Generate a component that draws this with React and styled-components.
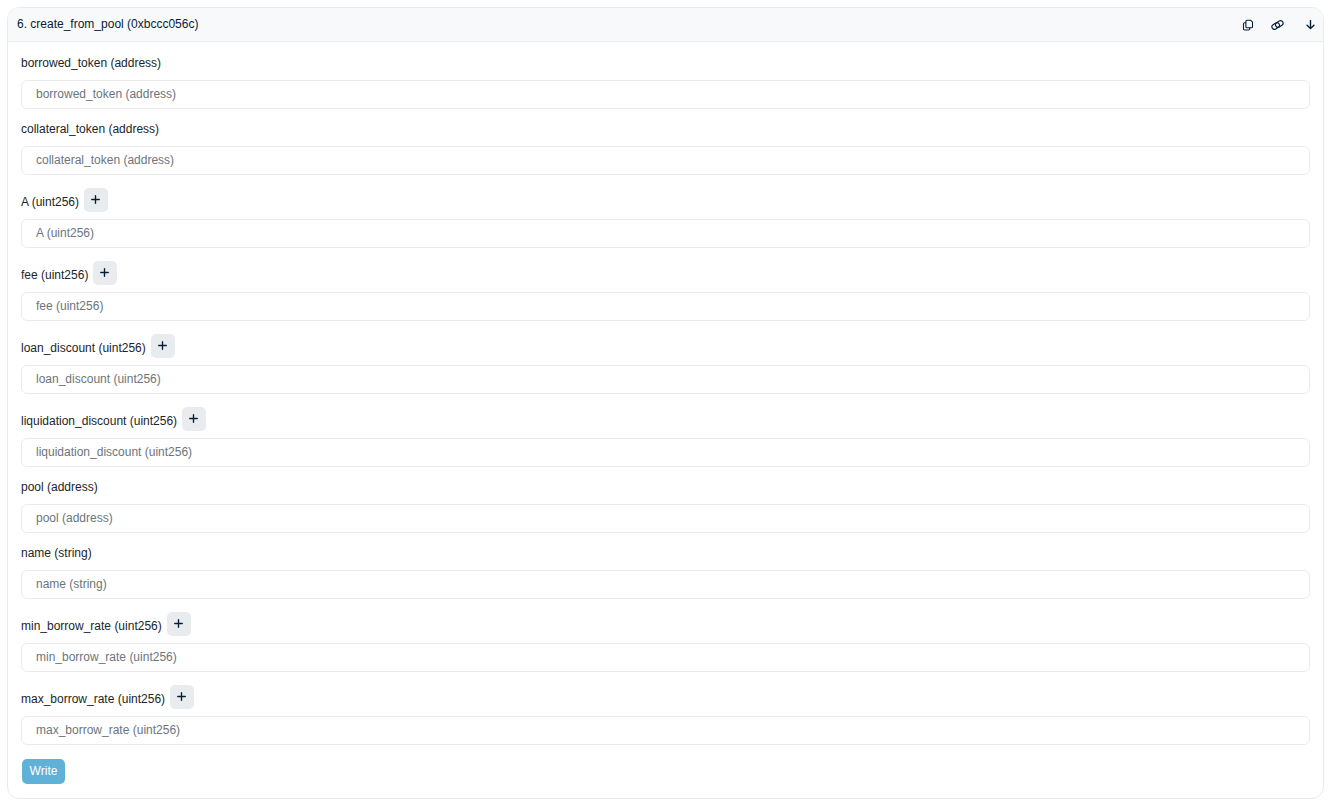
import React from "react";
import styled, { createGlobalStyle } from "styled-components";
import { FaArrowDown, FaPlus } from "react-icons/fa6";

const GlobalStyle = createGlobalStyle`
  *, *::before, *::after { box-sizing: border-box; }
  body {
    margin: 0;
    background: #fff;
    color: #212529;
    font-family: "Helvetica Neue", "Liberation Sans", Arial, sans-serif;
    font-size: 12px;
  }
  button, input { font: inherit; }
`;

const Card = styled.section`
  margin: 7px 5px 5px 7px;
  border: 1px solid #e9ecef;
  border-radius: 12px;
  overflow: hidden;
`;

const CardHeader = styled.header`
  display: flex;
  align-items: center;
  justify-content: space-between;
  height: 34px;
  padding: 0 7px 0 9px;
  background: #f8f9fa;
  border-bottom: 1px solid #e9ecef;
  color: #081d35;
`;

const Title = styled.h2`
  margin: 0;
  padding-bottom: 2px;
  font-size: 12px;
  font-weight: 400;
  line-height: 16px;
`;

const Actions = styled.div`
  display: flex;
  align-items: center;
  gap: ${({ $gap }) => $gap}px;
`;

const IconButton = styled.button`
  display: flex;
  padding: 0;
  border: 0;
  background: none;
  color: inherit;
  cursor: pointer;
`;

const Form = styled.form`
  display: flex;
  flex-direction: column;
  gap: 13px;
  padding: 14px 13px 13px;
`;

const LabelRow = styled.div`
  display: flex;
  align-items: flex-end;
  gap: 5px;
  margin-bottom: 7px;
`;

const Label = styled.label`
  padding-bottom: 2px;
  line-height: 15px;
`;

const AddButton = styled.button`
  display: flex;
  align-items: center;
  justify-content: center;
  width: 24px;
  height: 24px;
  padding: 0 1px 2px 0;
  border: 0;
  border-radius: 5px;
  background: #e9ecef;
  color: #081d35;
  cursor: pointer;
`;

const Input = styled.input`
  display: block;
  width: 100%;
  height: 29px;
  padding: 0 14px 1px;
  border: 1px solid #e9ecef;
  border-radius: 6px;
  background: #fff;
  color: #212529;
  &::placeholder { color: #6c757d; opacity: 1; }
`;

const WriteButton = styled.button`
  align-self: flex-start;
  height: 25px;
  min-width: 43px;
  margin: 1px;
  padding: 0 7px 2px;
  border: 0;
  border-radius: 5px;
  background: #5fb1d8;
  color: #fff;
  font-weight: 500;
  cursor: pointer;
`;

const Outline = styled.svg`
  display: block;
  fill: none;
  stroke: currentColor;
  stroke-width: 1.1;
  stroke-linecap: round;
  stroke-linejoin: round;
`;

const CopyIcon = () => (
  <Outline width="12" height="12" viewBox="0 0 12 12" aria-hidden="true">
    <path d="M5 1.2h3.6l1.9 1.9v4.6a1.1 1.1 0 0 1-1.1 1.1H5a1.1 1.1 0 0 1-1.1-1.1V2.3A1.1 1.1 0 0 1 5 1.2Z" />
    <path d="M3.6 3.8H2.6a1.1 1.1 0 0 0-1.1 1.1v5a1.1 1.1 0 0 0 1.1 1.1h4a1.1 1.1 0 0 0 1.1-1.1V9" />
  </Outline>
);

const LinkIcon = () => (
  <Outline width="13" height="12" viewBox="0 0 13 12" aria-hidden="true">
    <rect x="0.7" y="4.5" width="8" height="5" rx="2.5" transform="rotate(-32 4.7 7)" />
    <rect x="4.3" y="2.5" width="8" height="5" rx="2.5" transform="rotate(-32 8.3 5)" />
  </Outline>
);

const fields = [
  { name: "borrowed_token", type: "address" },
  { name: "collateral_token", type: "address" },
  { name: "A", type: "uint256" },
  { name: "fee", type: "uint256" },
  { name: "loan_discount", type: "uint256" },
  { name: "liquidation_discount", type: "uint256" },
  { name: "pool", type: "address" },
  { name: "name", type: "string" },
  { name: "min_borrow_rate", type: "uint256" },
  { name: "max_borrow_rate", type: "uint256" },
];

const Field = ({ name, type }) => {
  const text = `${name} (${type})`;
  return (
    <div>
      <LabelRow>
        <Label htmlFor={name}>{text}</Label>
        {type === "uint256" && (
          <AddButton type="button" aria-label={`Add zeros to ${name}`}>
            <FaPlus size={11} />
          </AddButton>
        )}
      </LabelRow>
      <Input id={name} type="text" placeholder={text} />
    </div>
  );
};

export default function App() {
  return (
    <>
      <GlobalStyle />
      <Card>
        <CardHeader>
          <Title>6. create_from_pool (0xbccc056c)</Title>
          <Actions $gap={21}>
            <Actions $gap={17}>
              <IconButton type="button" aria-label="Copy method name"><CopyIcon /></IconButton>
              <IconButton type="button" aria-label="Copy link"><LinkIcon /></IconButton>
            </Actions>
            <IconButton type="button" aria-label="Collapse"><FaArrowDown size={11} /></IconButton>
          </Actions>
        </CardHeader>
        <Form>
          {fields.map((field) => <Field key={field.name} {...field} />)}
          <WriteButton type="button">Write</WriteButton>
        </Form>
      </Card>
    </>
  );
}
